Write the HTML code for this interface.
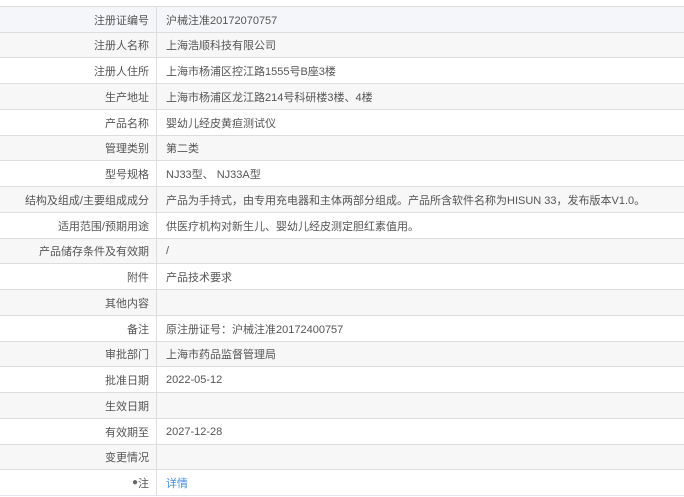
<!DOCTYPE html>
<html><head><meta charset="utf-8"><style>
html,body{margin:0;padding:0;width:684px;height:497px;overflow:hidden;background:#fff;}
body{font-family:"Liberation Sans","Noto Sans CJK SC",sans-serif;font-size:11px;color:#555;}
.r{position:absolute;left:0;width:684px;border-top:1px solid #ddd;box-sizing:border-box;}
.g{background:#f7f7f7;}
.l{position:absolute;left:0;width:157px;top:0;bottom:0;border-right:1px solid #ddd;padding-right:7px;box-sizing:border-box;display:flex;align-items:center;justify-content:flex-end;}
.v{position:absolute;left:166px;top:0;bottom:0;display:flex;align-items:center;white-space:nowrap;}
a{color:#3d8fe0;text-decoration:none;}
</style></head><body>
<div id="t"></div>
<script>
var rows=[["注册证编号","沪械注准20172070757"],["注册人名称","上海浩顺科技有限公司"],["注册人住所","上海市杨浦区控江路1555号B座3楼"],["生产地址","上海市杨浦区龙江路214号科研楼3楼、4楼"],["产品名称","婴幼儿经皮黄疸测试仪"],["管理类别","第二类"],["型号规格","NJ33型、 NJ33A型"],["结构及组成/主要组成成分","产品为手持式，由专用充电器和主体两部分组成。产品所含软件名称为HISUN 33，发布版本V1.0。"],["适用范围/预期用途","供医疗机构对新生儿、婴幼儿经皮测定胆红素值用。"],["产品储存条件及有效期","/"],["附件","产品技术要求"],["其他内容",""],["备注","原注册证号：沪械注准20172400757"],["审批部门","上海市药品监督管理局"],["批准日期","2022-05-12"],["生效日期",""],["有效期至","2027-12-28"],["变更情况",""],["<span style=\"color:#666;font-size:10px\">&#9679;</span>注","<a>详情</a>"]];
var h="";
for(var i=0;i<rows.length;i++){var t=Math.round(6+i*25.74),b=Math.round(6+(i+1)*25.74);
var gray=(i==0||i%2==1);
h+='<div class="r'+(gray?' g':'')+'" style="top:'+t+'px;height:'+(b-t+(i==rows.length-1?1:0))+'px;'+(i==0?'background:#f5f6f9;':'')+(i==rows.length-1?'border-bottom:1px solid #e3e6ee;':'')+'"><div class="l">'+rows[i][0]+'</div><div class="v">'+rows[i][1]+'</div></div>';}
document.getElementById("t").innerHTML=h;
</script>
</body></html>
